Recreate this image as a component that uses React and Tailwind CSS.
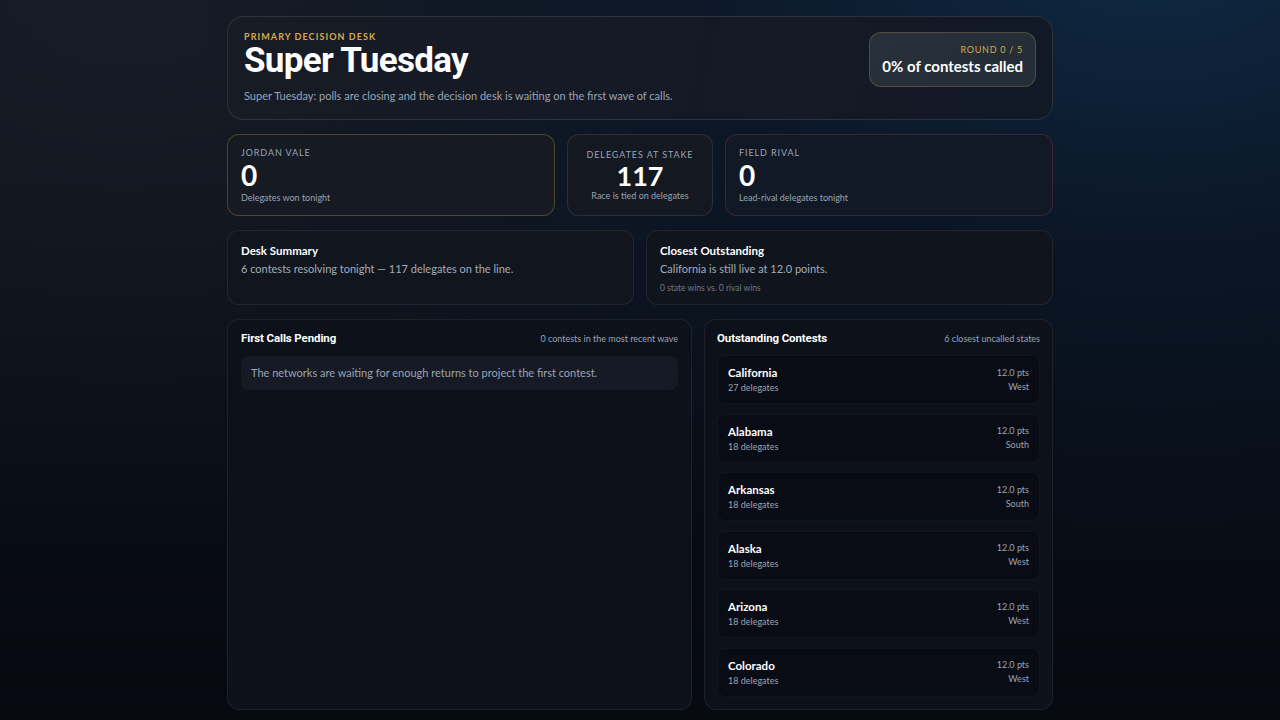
const contests = [
  { name: "California", delegates: 27, margin: "12.0 pts", region: "West" },
  { name: "Alabama", delegates: 18, margin: "12.0 pts", region: "South" },
  { name: "Arkansas", delegates: 18, margin: "12.0 pts", region: "South" },
  { name: "Alaska", delegates: 18, margin: "12.0 pts", region: "West" },
  { name: "Arizona", delegates: 18, margin: "12.0 pts", region: "West" },
  { name: "Colorado", delegates: 18, margin: "12.0 pts", region: "West" },
];

const heading = { fontFamily: '"Roboto", "Liberation Sans", sans-serif' };

export default function App() {
  return (
    <div
      className="min-h-screen w-full bg-[#060910] bg-[radial-gradient(ellipse_at_90%_-10%,#0f2a45_0%,rgba(10,25,45,0.6)_30%,transparent_60%),radial-gradient(ellipse_at_10%_0%,#171c26_0%,transparent_55%),linear-gradient(180deg,#0d121b_0%,#060910_100%)] text-white"
      style={{ fontFamily: '"Lato", "Noto Sans", sans-serif' }}
    >
      <div className="mx-auto flex w-[826px] flex-col gap-[14px] pt-4 pb-3">
        {/* Header */}
        <div className="flex items-start justify-between rounded-2xl border border-white/10 bg-[linear-gradient(100deg,#171b24_0%,#121926_100%)] pl-4 pr-4 pt-[14px] pb-4">
          <div>
            <p className="text-[9px] font-bold uppercase leading-[12px] tracking-[0.12em] text-[#d6aa4c]">Primary Decision Desk</p>
            <h1 className="text-[35px] font-bold leading-[36px] tracking-[-0.02em] text-white" style={heading}>
              Super Tuesday
            </h1>
            <p className="mt-[10px] text-[11px] leading-[14px] text-[#9aa4b4]">
              Super Tuesday: polls are closing and the decision desk is waiting on the first wave of calls.
            </p>
          </div>
          <div className="mt-[1px] rounded-xl border border-[#d6aa4c]/25 bg-[linear-gradient(135deg,#283039_0%,#232d36_100%)] px-3 pt-[11px] pb-[10px] text-right">
            <p className="text-[9px] uppercase leading-[12px] tracking-[0.08em] text-[#d6aa4c]">Round 0 / 5</p>
            <p className="text-[15px] font-bold leading-[20px] text-white">0% of contests called</p>
          </div>
        </div>

        {/* Stats */}
        <div className="grid grid-cols-[1fr_146px_1fr] gap-3">
          <div className="h-[82px] rounded-xl border border-[#d6aa4c]/30 bg-[#151a23] px-[13px] pt-[12px]">
            <p className="text-[9px] uppercase leading-[12px] tracking-[0.1em] text-[#9aa4b4]">Jordan Vale</p>
            <p className="mt-[2px] text-[28px] font-bold leading-[28px] text-white">0</p>
            <p className="mt-[3px] text-[9px] leading-[12px] text-[#9aa4b4]">Delegates won tonight</p>
          </div>
          <div className="flex h-[82px] flex-col items-center rounded-xl border border-white/10 bg-[#131821] pt-[14px]">
            <p className="text-[9px] uppercase leading-[12px] tracking-[0.1em] text-[#9aa4b4]">Delegates at Stake</p>
            <p className="text-[27px] font-bold leading-[29px] text-white">117</p>
            <p className="text-[9px] leading-[12px] text-[#9aa4b4]">Race is tied on delegates</p>
          </div>
          <div className="h-[82px] rounded-xl border border-[#c0505a]/25 bg-[#111826] px-[13px] pt-[12px]">
            <p className="text-[9px] uppercase leading-[12px] tracking-[0.1em] text-[#9aa4b4]">Field Rival</p>
            <p className="mt-[2px] text-[28px] font-bold leading-[28px] text-white">0</p>
            <p className="mt-[3px] text-[9px] leading-[12px] text-[#9aa4b4]">Lead-rival delegates tonight</p>
          </div>
        </div>

        {/* Summary */}
        <div className="grid grid-cols-2 gap-3">
          <div className="h-[75px] rounded-xl border border-white/[0.07] bg-[#11151d] px-[13px] pt-[13px]">
            <p className="text-[11.5px] font-bold leading-[14px] text-white">Desk Summary</p>
            <p className="mt-[4px] text-[11px] leading-[14px] text-[#a3acba]">6 contests resolving tonight — 117 delegates on the line.</p>
          </div>
          <div className="h-[75px] rounded-xl border border-white/[0.07] bg-[#10141c] px-[13px] pt-[13px]">
            <p className="text-[11.5px] font-bold leading-[14px] text-white">Closest Outstanding</p>
            <p className="mt-[4px] text-[11px] leading-[14px] text-[#a3acba]">California is still live at 12.0 points.</p>
            <p className="mt-[7px] text-[8.5px] leading-[10px] text-[#717a88]">0 state wins vs. 0 rival wins</p>
          </div>
        </div>

        {/* Lower panels */}
        <div className="grid grid-cols-[465px_1fr] gap-3">
          <div className="flex h-[391px] flex-col rounded-xl border border-white/[0.07] bg-[#0c111a] px-[13px] pt-[11px]">
            <div className="flex h-4 items-center justify-between">
              <p className="text-[11.5px] font-bold tracking-[-0.01em] text-white" style={heading}>First Calls Pending</p>
              <p className="text-[9px] text-[#9aa4b4]">0 contests in the most recent wave</p>
            </div>
            <div className="mt-[9px] rounded-lg bg-[#151a24] px-[10px] py-[10px]">
              <p className="text-[11px] leading-[14px] text-[#9aa4b4]">The networks are waiting for enough returns to project the first contest.</p>
            </div>
          </div>

          <div className="flex h-[391px] flex-col rounded-xl border border-white/[0.07] bg-[#0c111a] px-[12px] pt-[11px]">
            <div className="flex h-4 items-center justify-between">
              <p className="text-[11.5px] font-bold tracking-[-0.01em] text-white" style={heading}>Outstanding Contests</p>
              <p className="text-[9px] text-[#9aa4b4]">6 closest uncalled states</p>
            </div>
            <div className="mt-[8px] flex flex-col gap-[9.6px]">
              {contests.map((c) => (
                <div
                  key={c.name}
                  className="flex h-[49px] items-center justify-between rounded-lg border border-white/[0.04] bg-[#090c14] px-[10px]"
                >
                  <div>
                    <p className="text-[11.5px] font-bold leading-[15px] text-white">{c.name}</p>
                    <p className="mt-[2px] text-[9px] leading-[12px] text-[#9aa4b4]">{c.delegates} delegates</p>
                  </div>
                  <div className="text-right">
                    <p className="text-[9px] leading-[14px] text-[#9aa4b4]">{c.margin}</p>
                    <p className="text-[9px] leading-[14px] text-[#9aa4b4]">{c.region}</p>
                  </div>
                </div>
              ))}
            </div>
          </div>
        </div>
      </div>
    </div>
  );
}
